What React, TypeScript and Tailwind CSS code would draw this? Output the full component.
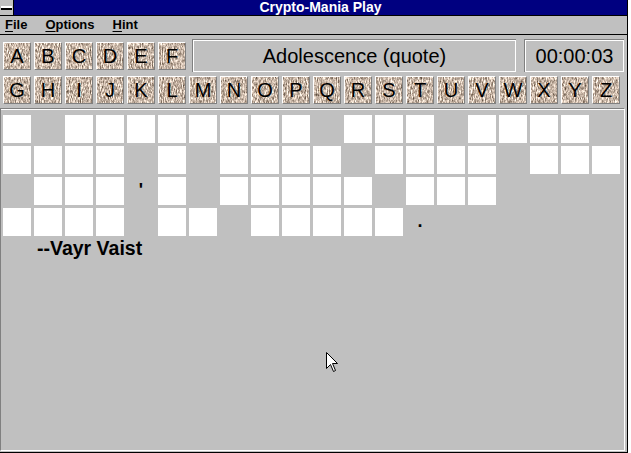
const rowA = ["A", "B", "C", "D", "E", "F"];
const rowB = "GHIJKLMNOPQRSTUVWXYZ".split("");

// W = letter square, . = blank
const puzzle = [
  "W.WWWWWWWW.WWW.WWWW.",
  "WWWW.W.WWWW.WWWW.WWW",
  ".WWW.W.WWWWW.WWW....",
  "WWWW.WW.WWWWW.......",
];
// punctuation shown in blank squares, keyed by row-col
const marks: Record<string, string> = { "2-4": "'", "3-13": "." };

function LetterKey({ letter, seed }: { letter: string; seed: number }) {
  const id = `marble-${letter}`;
  return (
    <div className="w-[28px] h-[28px] border-t border-l border-white border-b border-r border-b-[#808080] border-r-[#808080] grid">
      <svg width="26" height="26" className="col-start-1 row-start-1">
        <filter id={id} x="0" y="0" width="100%" height="100%" colorInterpolationFilters="sRGB">
          <feTurbulence type="fractalNoise" baseFrequency="0.9 0.3" numOctaves="3" seed={seed} />
          <feColorMatrix
            type="matrix"
            values="1.1 0 0 0 0.23  1.1 0 0 0 0.16  1.1 0 0 0 0.1  0 0 0 0 1"
          />
        </filter>
        <rect width="26" height="26" filter={`url(#${id})`} />
      </svg>
      <span className="col-start-1 row-start-1 flex items-center justify-center text-[20px] leading-none text-black">
        {letter}
      </span>
    </div>
  );
}

function InfoBox({ text, className }: { text: string; className: string }) {
  return (
    <div className={`h-[33px] border-t border-l border-[#808080] ${className}`}>
      <div className="h-full border border-white flex items-center justify-center text-[20px] leading-[20px] text-black">
        {text}
      </div>
    </div>
  );
}

function Cursor() {
  return (
    <svg width="13" height="21" viewBox="0 0 13 21" className="absolute left-[326px] top-[352px]">
      <path d="M0.5 0.5 L0.5 16.5 L4.5 12.5 L7.5 19.5 L9.5 18.5 L6.5 11.5 L11.5 11.5 Z" fill="white" stroke="black" strokeWidth="1" />
    </svg>
  );
}

export default function App() {
  return (
    <div className="relative w-[631px] h-[453px] flex bg-white font-['Liberation_Sans',Arial,sans-serif] overflow-hidden">
      <div className="w-[628px] h-full flex flex-col bg-[#c0c0c0] border-r border-b border-black">
        {/* title bar */}
        <div className="h-[16px] flex border-b border-black">
          <div className="w-[14px] h-full border-r border-black bg-[#c0c0c0] flex items-center justify-center">
            <div className="w-[11px] h-[4px] bg-white border-b-2 border-black" />
          </div>
          <div className="flex-1 bg-[#000080] flex items-center justify-center text-white text-[14px] font-bold leading-[15px]">
            Crypto-Mania Play
          </div>
        </div>

        {/* menu bar */}
        <div className="h-[19px] flex items-center pl-[5px] gap-[18px] border-b border-black text-[13px] font-bold leading-[18px] text-black">
          <span>
            <span className="underline underline-offset-2">F</span>ile
          </span>
          <span>
            <span className="underline underline-offset-2">O</span>ptions
          </span>
          <span>
            <span className="underline underline-offset-2">H</span>int
          </span>
        </div>

        {/* letters and status */}
        <div className="flex flex-col pl-[3px] pt-[4px] pb-[4px]">
          <div className="flex items-start h-[33px]">
            <div className="flex gap-[3px] mt-[3px]">
              {rowA.map((l, i) => (
                <LetterKey key={l} letter={l} seed={i + 1} />
              ))}
            </div>
            <InfoBox text="Adolescence (quote)" className="ml-[6px] w-[324px]" />
            <InfoBox text="00:00:03" className="ml-[8px] w-[100px]" />
          </div>
          <div className="flex gap-[3px] mt-[4px]">
            {rowB.map((l, i) => (
              <LetterKey key={l} letter={l} seed={i + 7} />
            ))}
          </div>
        </div>

        {/* puzzle panel */}
        <div className="flex-1 w-[625px] mb-[1px] border-t border-l border-[#808080] border-r border-b border-r-white border-b-white">
          <div className="h-full border-t border-white pt-[5px] pl-[2px]">
            <div className="grid grid-cols-[repeat(20,28px)] auto-rows-[28px] gap-[3px]">
              {puzzle.map((row, r) =>
                row.split("").map((c, col) => (
                  <div
                    key={`${r}-${col}`}
                    className={
                      c === "W"
                        ? "bg-white"
                        : "flex justify-center pt-[4px] text-[18px] leading-none font-bold text-black"
                    }
                  >
                    {c === "W" ? null : marks[`${r}-${col}`] ?? null}
                  </div>
                ))
              )}
            </div>
            <div className="mt-[3px] pl-[34px] text-[19.5px] leading-[19px] font-bold text-black">
              --Vayr Vaist
            </div>
          </div>
        </div>
      </div>
      <Cursor />
    </div>
  );
}
